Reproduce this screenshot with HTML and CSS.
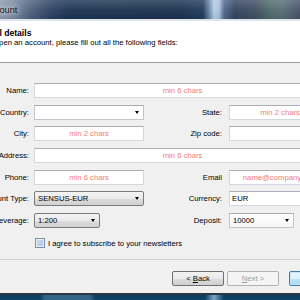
FILE: index.html
```html
<!DOCTYPE html>
<html lang="en">
  <head>
    <meta charset="UTF-8" />
    <title>Open Account</title>
    <link rel="stylesheet" href="styles.css">
  </head>
  <body>
    <div class="titlebar"><span class="title">Open Account</span></div>

    <div class="dialog">
      <div class="header">
        <div class="head-title">Personal details</div>
        <div class="head-sub">To open an account, please fill out all the following fields:</div>
      </div>

      <div class="content">
        <form class="form">
          <label class="lbl">Name:</label>
          <input class="field wide center" type="text" placeholder="min 6 chars" />

          <label class="lbl">Country:</label>
          <div class="combo"><span></span><span class="arrow"></span></div>
          <label class="lbl lbl-right">State:</label>
          <input class="field center" type="text" placeholder="min 2 chars" />

          <label class="lbl">City:</label>
          <input class="field center" type="text" placeholder="min 2 chars" />
          <label class="lbl lbl-right">Zip code:</label>
          <input class="field" type="text" />

          <label class="lbl">Address:</label>
          <input class="field wide center" type="text" placeholder="min 6 chars" />

          <label class="lbl">Phone:</label>
          <input class="field center" type="text" placeholder="min 6 chars" />
          <label class="lbl lbl-right">Email</label>
          <input class="field center" type="text" placeholder="name@company.com" />

          <label class="lbl">Account Type:</label>
          <div class="combo dark"><span>SENSUS-EUR</span><span class="arrow"></span></div>
          <label class="lbl lbl-right">Currency:</label>
          <input class="field" type="text" value="EUR" />

          <label class="lbl">Leverage:</label>
          <div class="combo dark leverage"><span>1:200</span><span class="arrow"></span></div>
          <label class="lbl lbl-right">Deposit:</label>
          <div class="combo deposit"><span>10000</span><span class="arrow"></span></div>

          <div class="agree">
            <span class="check"></span>
            <span>I agree to subscribe to your newsletters</span>
          </div>
        </form>
      </div>

      <div class="buttons">
        <button class="btn" type="button">&lt; <u>B</u>ack</button>
        <button class="btn" type="button" disabled><u>N</u>ext &gt;</button>
        <button class="btn default" type="button">Cancel</button>
      </div>
    </div>

    <div class="taskbar"></div>
  </body>
</html>
```

FILE: styles.css
```css
body {
  margin: 0;
  width: 300px;
  height: 300px;
  overflow: hidden;
  display: flex;
  flex-direction: column;
  background-color: #f0f0f0;
  font-family: "Liberation Sans", Arial, sans-serif;
  font-size: 7.7px;
  color: #000;
}

/* window caption, aero glass */
.titlebar {
  flex: none;
  height: 19px;
  display: flex;
  align-items: center;
  border-bottom: 2px solid #dfe4ea;
  background:
    linear-gradient(180deg, rgba(255, 255, 255, 0.18) 0, rgba(255, 255, 255, 0.04) 55%, rgba(0, 0, 0, 0.06) 100%),
    linear-gradient(90deg, #8d9cb0 0px, #7686a0 14px, #4f627e 30px, #2b4262 50px, #1c3453 70px, #1a3150 180px,
      #223b5b 203px, #7292b3 210px, #b6cce3 214px, #a9c2dc 219px, #51698a 224px, #33445f 235px,
      #3f4e62 255px, #4e6a68 270px, #566e74 282px, #45506a 300px);
}
.title {
  margin-left: -40.4px;
  font-size: 9.2px;
  color: #151515;
  white-space: nowrap;
  text-shadow: 0 0 5px rgba(255, 255, 255, 0.9), 0 0 8px rgba(220, 230, 240, 0.8);
}

.dialog {
  flex: none;
  margin-left: -40px;
  width: 390px;
  display: flex;
  flex-direction: column;
}

.header {
  height: 34px;
  padding-top: 7px;
  background-color: #fff;
  border-bottom: 1px solid #a0a0a0;
  white-space: nowrap;
}
.head-title {
  font-weight: bold;
  font-size: 8.6px;
  line-height: 10px;
  padding-left: 5.5px;
}
.head-sub {
  line-height: 10px;
  padding-left: 24.6px;
}

.content {
  box-sizing: border-box;
  height: 197px;
  padding-top: 20px;
  border-bottom: 1px solid #d5d5d5;
}

.form {
  display: grid;
  grid-template-columns: 74px 110px 85px 102px;
  grid-auto-rows: 15px;
  row-gap: 6.7px;
  align-items: center;
}
.lbl {
  text-align: right;
  padding-right: 5px;
  white-space: nowrap;
}
.lbl-right {
  padding-right: 7px;
}

.field {
  box-sizing: border-box;
  width: 100%;
  height: 15px;
  margin: 0;
  padding: 0 2px;
  border: 1px solid #d3d6dc;
  border-top-color: #abadb3;
  background-color: #fff;
  font-family: inherit;
  font-size: 7.7px;
  outline: none;
}
.field::placeholder {
  color: #f47b7b;
}
.center {
  text-align: center;
}
.wide {
  grid-column: 2 / 5;
}

.combo {
  box-sizing: border-box;
  height: 15px;
  padding: 0 4px 0 3px;
  display: flex;
  align-items: center;
  justify-content: space-between;
  border: 1px solid #c2c5cb;
  border-top-color: #abadb3;
  background-color: #fff;
}
.combo.dark {
  border-color: #7a7a7a;
  border-radius: 2px;
  background: linear-gradient(180deg, #f3f3f3 0%, #ebebeb 50%, #dddddd 51%, #d0d0d0 100%);
}
.leverage {
  width: 66px;
}
.deposit {
  width: 65px;
  background: linear-gradient(180deg, #ffffff 0%, #f6f6f6 100%);
}
.arrow {
  width: 0;
  height: 0;
  border-top: 3px solid #000;
  border-left: 2.5px solid transparent;
  border-right: 2.5px solid transparent;
}

.agree {
  grid-column: 2 / 5;
  display: flex;
  align-items: center;
  gap: 3px;
  padding-left: 1px;
  margin-top: 2px;
  white-space: nowrap;
}
.check {
  box-sizing: border-box;
  width: 10px;
  height: 10px;
  border: 1px solid #7c8ea3;
  box-shadow: inset 0 0 0 1px #e8f0f9;
  background: linear-gradient(135deg, #c8ddf3 0%, #a9c8ea 100%);
}

.buttons {
  height: 33px;
  box-sizing: border-box;
  padding: 11px 0 0 212px;
  display: flex;
  align-items: flex-start;
  gap: 3px;
}
.btn {
  box-sizing: border-box;
  width: 52px;
  height: 15px;
  padding: 0;
  border: 1px solid #707070;
  border-radius: 2px;
  background: linear-gradient(180deg, #f2f2f2 0%, #ebebeb 50%, #dddddd 51%, #cfcfcf 100%);
  font-family: inherit;
  font-size: 7.7px;
  color: #000;
}
.btn:disabled {
  border-color: #adb2b5;
  background: #f4f4f4;
  color: #a0a0a0;
}
.btn.default {
  margin-left: 7px;
  border-color: #3c7fb1;
  box-shadow: inset 0 0 0 1px #c6e7fb;
  background: linear-gradient(180deg, #eaf6fd 0%, #d9f0fc 50%, #bee6fd 51%, #a7d9f5 100%);
}

.taskbar {
  flex: none;
  height: 7px;
  border-top: 2px solid #2b3846;
  background:
    linear-gradient(90deg, rgba(255, 255, 255, 0) 40px, rgba(120, 170, 200, 0.35) 45px, rgba(120, 170, 200, 0.35) 90px, rgba(255, 255, 255, 0) 95px,
      rgba(255, 255, 255, 0) 205px, rgba(170, 210, 235, 0.7) 214px, rgba(255, 255, 255, 0) 224px),
    linear-gradient(180deg, #0d3b5c 0%, #0a4a70 100%);
}
```
